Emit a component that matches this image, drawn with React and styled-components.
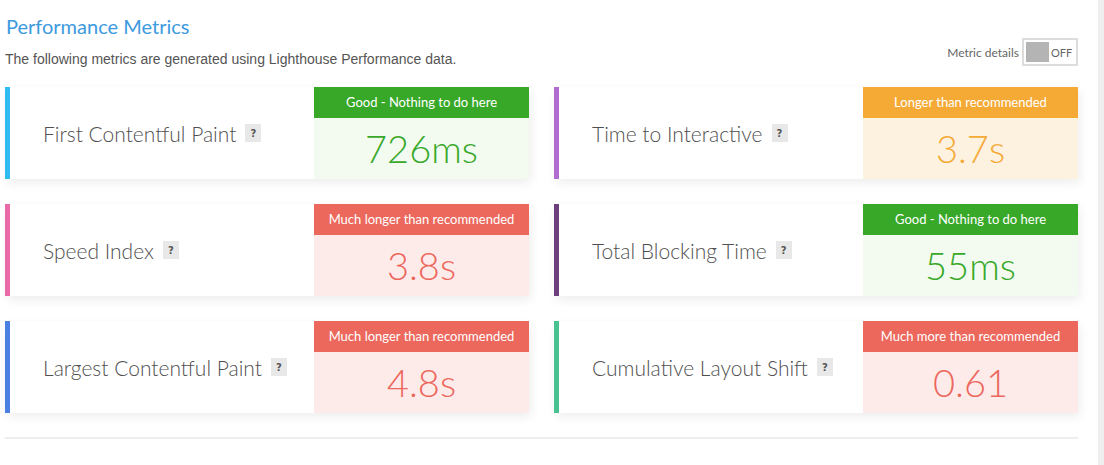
import React from 'react';
import styled, { createGlobalStyle } from 'styled-components';

const GlobalStyle = createGlobalStyle`
  html, body {
    margin: 0;
    padding: 0;
    background: #fff;
  }
  body {
    font-family: Lato, "Open Sans", sans-serif;
  }
`;

const Page = styled.div`
  display: flex;
  width: 1104px;
  height: 465px;
  overflow: hidden;
`;

const Main = styled.main`
  flex: 1;
  padding: 14px 20px 0 5px;
`;

const Gutter = styled.div`
  width: 6px;
  background: #efefef;
`;

const Header = styled.header`
  display: flex;
  justify-content: space-between;
  align-items: flex-end;
`;

const Title = styled.h2`
  margin: 0 0 13px 1px;
  font-size: 20px;
  line-height: 24px;
  font-weight: 400;
  color: #3d9ae0;
`;

const Subtitle = styled.p`
  margin: 0;
  font-family: "Liberation Sans", Arial, sans-serif;
  font-size: 14px;
  line-height: 16px;
  color: #555;
`;

const Toggle = styled.div`
  display: flex;
  align-items: center;
  gap: 3px;
  margin-bottom: 1px;
  font-size: 12px;
  color: #666;
`;

const Switch = styled.div`
  display: flex;
  align-items: center;
  box-sizing: border-box;
  width: 56px;
  height: 28px;
  padding: 2px;
  border: 2px solid #dcdcdc;
  background: #fff;
`;

const Knob = styled.span`
  width: 23px;
  height: 20px;
  background: #b4b4b4;
`;

const SwitchText = styled.span`
  flex: 1;
  text-align: center;
  font-size: 11px;
  color: #666;
`;

const Grid = styled.section`
  display: grid;
  grid-template-columns: 524px 524px;
  gap: 25px;
  margin-top: 20px;
`;

const Card = styled.div`
  display: flex;
  height: 92px;
  background: #fff;
  border-left: 5px solid ${p => p.accent};
  box-shadow: 2px 4px 10px rgba(0, 0, 0, 0.07);
`;

const Label = styled.div`
  flex: 1;
  display: flex;
  align-items: center;
  padding-left: 33px;
  font-size: 21px;
  font-weight: 300;
  color: #505050;
`;

const Help = styled.span`
  display: inline-flex;
  align-items: center;
  justify-content: center;
  width: 16px;
  height: 18px;
  margin-left: 9px;
  background: #e8e8e8;
  color: #555;
  font-family: "DejaVu Sans", sans-serif;
  font-size: 10px;
  font-weight: 700;
`;

const Status = styled.div`
  display: flex;
  flex-direction: column;
  width: 215px;
  background: ${p => p.bg};
`;

const StatusHead = styled.div`
  height: 31px;
  line-height: 31px;
  text-align: center;
  font-size: 13px;
  color: #fff;
  background: ${p => p.color};
`;

const Value = styled.div`
  flex: 1;
  display: flex;
  align-items: center;
  justify-content: center;
  padding-bottom: 1px;
  font-size: 38px;
  font-weight: 300;
  color: ${p => p.color};
`;

const Divider = styled.hr`
  margin: 24px 0 0;
  border: none;
  height: 2px;
  background: #eee;
`;

const tones = {
  good: { color: '#38a829', bg: '#f3fbf0' },
  warn: { color: '#f5aa36', bg: '#fdf1df' },
  bad: { color: '#ec675c', bg: '#fdebea' },
};

const metrics = [
  { name: 'First Contentful Paint', accent: '#2fbcf2', tone: 'good', note: 'Good - Nothing to do here', value: '726ms' },
  { name: 'Time to Interactive', accent: '#b06dcf', tone: 'warn', note: 'Longer than recommended', value: '3.7s' },
  { name: 'Speed Index', accent: '#e96aa6', tone: 'bad', note: 'Much longer than recommended', value: '3.8s' },
  { name: 'Total Blocking Time', accent: '#6d3f7c', tone: 'good', note: 'Good - Nothing to do here', value: '55ms' },
  { name: 'Largest Contentful Paint', accent: '#4a80e2', tone: 'bad', note: 'Much longer than recommended', value: '4.8s' },
  { name: 'Cumulative Layout Shift', accent: '#48c290', tone: 'bad', note: 'Much more than recommended', value: '0.61' },
];

const App = () => (
  <Page>
    <GlobalStyle />
    <Main>
      <Header>
        <div>
          <Title>Performance Metrics</Title>
          <Subtitle>The following metrics are generated using Lighthouse Performance data.</Subtitle>
        </div>
        <Toggle>
          Metric details
          <Switch>
            <Knob />
            <SwitchText>OFF</SwitchText>
          </Switch>
        </Toggle>
      </Header>
      <Grid>
        {metrics.map(m => {
          const t = tones[m.tone];
          return (
            <Card key={m.name} accent={m.accent}>
              <Label>
                {m.name}
                <Help>?</Help>
              </Label>
              <Status bg={t.bg}>
                <StatusHead color={t.color}>{m.note}</StatusHead>
                <Value color={t.color}>{m.value}</Value>
              </Status>
            </Card>
          );
        })}
      </Grid>
      <Divider />
    </Main>
    <Gutter />
  </Page>
);

export default App;
